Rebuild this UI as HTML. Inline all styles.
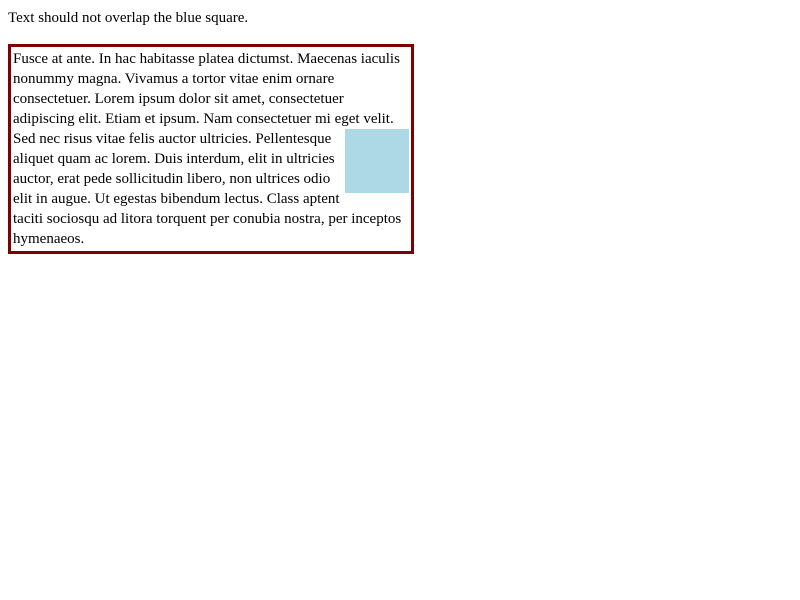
<!DOCTYPE html>
<html><head><style>
body{margin:8px;font-family:"Liberation Serif",serif;font-size:15px;line-height:20px;color:#000;background:#fff}
p{margin:0 0 16px 0}
.box{width:396px;border:3px solid #800000;padding:2px;}
.sp{float:right;width:0;height:80px}
.sq{float:right;clear:right;width:64px;height:64px;background:#add8e6}
</style></head><body>
<p>Text should not overlap the blue square.</p>
<div class="box"><div class="sp"></div><div class="sq"></div>Fusce at ante. In hac habitasse platea dictumst. Maecenas iaculis nonummy magna. Vivamus a tortor vitae enim ornare consectetuer. Lorem ipsum dolor sit amet, consectetuer adipiscing elit. Etiam et ipsum. Nam consectetuer mi eget velit. Sed nec risus vitae felis auctor ultricies. Pellentesque aliquet quam ac lorem. Duis interdum, elit in ultricies auctor, erat pede sollicitudin libero, non ultrices odio elit in augue. Ut egestas bibendum lectus. Class aptent taciti sociosqu ad litora torquent per conubia nostra, per inceptos hymenaeos.</div>
</body></html>
